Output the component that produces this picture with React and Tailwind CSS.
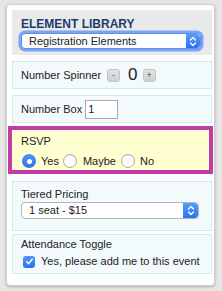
import React from "react";

function Stepper({ w = 15 }) {
  return (
    <div className="flex items-center justify-center h-full rounded-r-[4px] bg-gradient-to-b from-[#5b9cf9] to-[#2f6ff0]" style={{ width: w }}>
      <svg width="8" height="11" viewBox="0 0 8 11" fill="none">
        <path d="M1.5 4L4 1.5L6.5 4" stroke="white" strokeWidth="1.3" strokeLinecap="round" strokeLinejoin="round" />
        <path d="M1.5 7L4 9.5L6.5 7" stroke="white" strokeWidth="1.3" strokeLinecap="round" strokeLinejoin="round" />
      </svg>
    </div>
  );
}

function Radio({ checked }) {
  if (checked) {
    return (
      <div className="w-[14px] h-[14px] rounded-full bg-gradient-to-b from-[#4f95f9] to-[#2d72f0] flex items-center justify-center shrink-0">
        <div className="w-[5px] h-[5px] rounded-full bg-white" />
      </div>
    );
  }
  return <div className="w-[14px] h-[14px] rounded-full bg-white border border-[#a9a9a9] shadow-[inset_0_1px_1px_rgba(0,0,0,0.08)] shrink-0" />;
}

function SpinBtn({ children }) {
  return (
    <div className="w-[13px] h-[13px] rounded-[3px] bg-gradient-to-b from-[#e2e2e2] to-[#cfcfcf] border border-[#c4c4c4] flex items-center justify-center text-[9px] leading-none text-[#555]">
      {children}
    </div>
  );
}

export default function App() {
  return (
    <div
      className="w-[222px] h-[291px] bg-[#e6e6e6] overflow-hidden pt-[4px] pl-[6px] text-[#222]"
      style={{ fontFamily: '"Liberation Sans", Arial, Helvetica, sans-serif' }}
    >
      <div className="w-[209px] h-[282px] bg-white rounded-[4px] border border-[#cfcfcf] shadow-[0_1px_3px_rgba(0,0,0,0.25)] px-[5px] pt-[5px]">
        {/* Header */}
        <div className="w-[200px] h-[45px] bg-[#e9e9e9] pt-[7px] pl-[9px]">
          <div className="text-[12px] leading-[14px] font-bold text-[#1d3a6c]">ELEMENT LIBRARY</div>
          <div className="mt-[2px] w-[180px] h-[16px] rounded-[4px] bg-white flex items-stretch shadow-[0_0_0_2.5px_#79a6f4] border border-[#5d8ef0]">
            <div className="flex-1 text-[11px] leading-[14px] pl-[7px]">Registration Elements</div>
            <Stepper w={14} />
          </div>
        </div>

        {/* Number Spinner */}
        <div className="mt-[6px] w-[200px] h-[28px] bg-[#f3fafc] border border-[#cbecf3] flex items-center pl-[8px]">
          <span className="text-[11px] leading-[13px]">Number Spinner</span>
          <div className="ml-[6px]"><SpinBtn>-</SpinBtn></div>
          <span className="ml-[8px] text-[17px] leading-[18px]">0</span>
          <div className="ml-[5px]"><SpinBtn>+</SpinBtn></div>
        </div>

        {/* Number Box */}
        <div className="mt-[6px] w-[200px] h-[28px] bg-[#f3fafc] border border-[#cbecf3] flex items-center pl-[8px]">
          <span className="text-[11px] leading-[13px]">Number Box</span>
          <div className="ml-[3px] w-[33px] h-[19px] bg-white border border-[#a9a9a9] text-[11px] leading-[17px] pl-[2px]">1</div>
        </div>

        {/* RSVP */}
        <div className="mt-[3px] -ml-[4px] w-[205px] border-4 border-[#c23ca8] bg-[#ffffd2] pt-[5px] pb-[2px] pl-[9px]">
          <div className="text-[11px] leading-[13px]">RSVP</div>
          <div className="mt-[6px] flex items-center h-[14px] text-[11px] leading-[13px]">
            <div className="ml-[1px]"><Radio checked /></div>
            <span className="ml-[5px]">Yes</span>
            <div className="ml-[4px]"><Radio /></div>
            <span className="ml-[6px]">Maybe</span>
            <div className="ml-[5px]"><Radio /></div>
            <span className="ml-[5px]">No</span>
          </div>
        </div>

        {/* Tiered Pricing */}
        <div className="mt-[7px] w-[200px] bg-[#f3fafc] border border-[#cbecf3] pt-[6px] pb-[11px] pl-[8px]">
          <div className="text-[11px] leading-[13px]">Tiered Pricing</div>
          <div className="mt-[1px] w-[178px] h-[17px] rounded-[4px] bg-white border border-[#b5b5b5] flex items-stretch">
            <div className="flex-1 text-[11px] leading-[15px] pl-[7px]">1 seat - $15</div>
            <Stepper w={15} />
          </div>
        </div>

        {/* Attendance Toggle */}
        <div className="mt-[3px] w-[200px] bg-[#f3fafc] border border-[#cbecf3] pt-[3px] pb-[5px] pl-[8px]">
          <div className="text-[11px] leading-[13px]">Attendance Toggle</div>
          <div className="mt-[4px] flex items-center h-[13px] text-[11px] leading-[13px]">
            <div className="ml-[2px] w-[12px] h-[12px] rounded-[3px] bg-gradient-to-b from-[#4f95f9] to-[#2d72f0] flex items-center justify-center">
              <svg width="9" height="9" viewBox="0 0 9 9" fill="none">
                <path d="M1.8 4.8L3.6 6.6L7.2 2.2" stroke="white" strokeWidth="1.5" strokeLinecap="round" strokeLinejoin="round" />
              </svg>
            </div>
            <span className="ml-[6px]">Yes, please add me to this event</span>
          </div>
        </div>
      </div>
    </div>
  );
}
